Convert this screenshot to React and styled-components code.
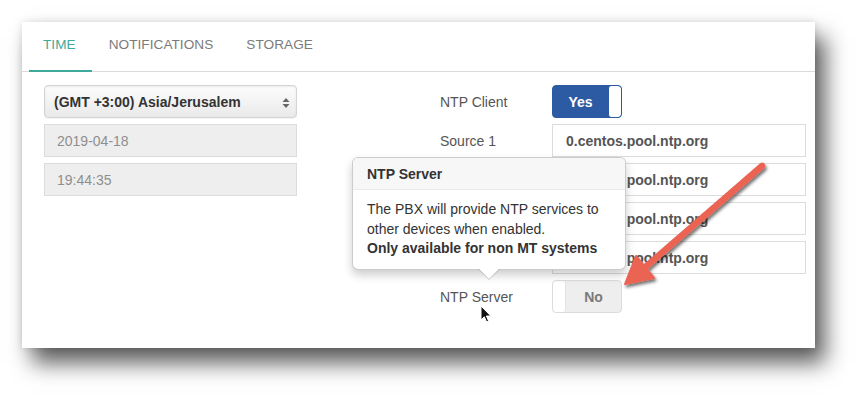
import React from "react";
import styled, { createGlobalStyle } from "styled-components";

const Global = createGlobalStyle`
  html, body { margin: 0; padding: 0; background: #fff; }
  body { font-family: "Liberation Sans", Arial, Helvetica, sans-serif; }
  * { box-sizing: border-box; }
`;

const Stage = styled.div`
  position: relative;
  width: 861px;
  height: 394px;
  padding: 22px 0 0 22px;
  overflow: hidden;
`;

const Panel = styled.div`
  position: relative;
  width: 793px;
  height: 326px;
  background: #fff;
  box-shadow: 10px 15px 21px rgba(0, 0, 0, 0.64), 0 0 8px rgba(0, 0, 0, 0.12);
`;

const TabBar = styled.div`
  display: flex;
  height: 50px;
  padding-left: 7px;
  border-bottom: 1px solid #dcdcdc;
`;

const Tab = styled.div`
  display: flex;
  align-items: center;
  padding: 0 16px 4px ${(p) => (p.$active ? "14px" : "17px")};
  margin-bottom: -1px;
  font-size: 13.6px;
  letter-spacing: 0.05px;
  color: ${(p) => (p.$active ? "#3fa99c" : "#7b7b7b")};
  border-bottom: 2px solid ${(p) => (p.$active ? "#3fa99c" : "transparent")};
`;

const Body = styled.div`
  display: flex;
  justify-content: space-between;
  padding: 13px 9px 0 22px;
`;

const LeftCol = styled.div`
  display: flex;
  flex-direction: column;
  gap: 6px;
  width: 253px;
`;

const Select = styled.div`
  position: relative;
  height: 33px;
  display: flex;
  align-items: center;
  padding: 0 9px;
  border: 1px solid #d4d4d4;
  border-radius: 4px;
  background: linear-gradient(#fdfdfd, #e9e9e9);
  box-shadow: inset 0 1px 2px rgba(0, 0, 0, 0.08), 0 1px 1px rgba(0, 0, 0, 0.05);
  font-size: 14px;
  font-weight: bold;
  color: #333;
`;

const Caret = styled.svg`
  position: absolute;
  right: 6px;
  top: 11px;
`;

const ReadOnly = styled.div`
  height: 33px;
  display: flex;
  align-items: center;
  padding: 0 12px;
  background: #eeeeee;
  border: 1px solid #dcdcdc;
  font-size: 14px;
  color: #8e8e8e;
`;

const Form = styled.div`
  display: grid;
  grid-template-columns: 112px 254px;
  grid-auto-rows: 33px;
  row-gap: 6px;
`;

const Label = styled.div`
  display: flex;
  align-items: center;
  font-size: 14px;
  color: #555;
`;

const Input = styled.div`
  display: flex;
  align-items: center;
  padding: 0 13px;
  border: 1px solid #dcdcdc;
  background: #fff;
  font-size: 14px;
  font-weight: bold;
  color: #555;
`;

const Toggle = styled.div`
  width: 70px;
  height: 33px;
  display: flex;
  flex-direction: ${(p) => (p.$on ? "row" : "row-reverse")};
  border-radius: 4px;
  overflow: hidden;
  border: 1px solid ${(p) => (p.$on ? "#2b5aa2" : "#dcdcdc")};
  background: ${(p) => (p.$on ? "#2c5ba3" : "#eeeeee")};
`;

const ToggleText = styled.div`
  flex: 1;
  display: flex;
  align-items: center;
  justify-content: center;
  font-size: 14px;
  font-weight: bold;
  color: ${(p) => (p.$on ? "#fff" : "#7a7a7a")};
`;

const Knob = styled.div`
  width: 13px;
  background: #fff;
  border-radius: 3px;
  border-left: ${(p) => (p.$on ? "1px solid #2b5aa2" : "0")};
  border-right: ${(p) => (p.$on ? "0" : "1px solid #e2e2e2")};
`;

const Popover = styled.div`
  position: absolute;
  left: 330px;
  top: 135px;
  width: 274px;
  background: #fff;
  border: 1px solid rgba(0, 0, 0, 0.2);
  border-radius: 6px;
  box-shadow: 0 5px 10px rgba(0, 0, 0, 0.2);
  font-size: 14px;
  color: #333;
  z-index: 3;

  &::before,
  &::after {
    content: "";
    position: absolute;
    left: 50%;
    width: 0;
    height: 0;
    border-style: solid;
    border-color: transparent;
  }
  &::before {
    bottom: -11px;
    margin-left: -11px;
    border-width: 11px 11px 0;
    border-top-color: rgba(0, 0, 0, 0.2);
  }
  &::after {
    bottom: -10px;
    margin-left: -10px;
    border-width: 10px 10px 0;
    border-top-color: #fff;
  }
`;

const PopTitle = styled.div`
  height: 32px;
  display: flex;
  align-items: center;
  padding: 0 14px;
  background: #f7f7f7;
  border-bottom: 1px solid #ebebeb;
  border-radius: 5px 5px 0 0;
  font-weight: bold;
`;

const PopContent = styled.div`
  padding: 10px 14px 10px;
  line-height: 19.5px;
`;

const Overlay = styled.svg`
  position: absolute;
  left: 0;
  top: 0;
  pointer-events: none;
  z-index: 5;
`;

export default function App() {
  return (
    <>
      <Global />
      <Stage>
        <Panel>
          <TabBar>
            <Tab $active>TIME</Tab>
            <Tab>NOTIFICATIONS</Tab>
            <Tab>STORAGE</Tab>
          </TabBar>
          <Body>
            <LeftCol>
              <Select>
                (GMT +3:00) Asia/Jerusalem
                <Caret width="8" height="12" viewBox="0 0 8 12">
                  <path d="M4 1 L7.5 5 L0.5 5 Z" fill="#666" />
                  <path d="M4 11 L7.5 7 L0.5 7 Z" fill="#666" />
                </Caret>
              </Select>
              <ReadOnly>2019-04-18</ReadOnly>
              <ReadOnly>19:44:35</ReadOnly>
            </LeftCol>
            <Form>
              <Label>NTP Client</Label>
              <Toggle $on>
                <ToggleText $on>Yes</ToggleText>
                <Knob $on />
              </Toggle>
              <Label>Source 1</Label>
              <Input>0.centos.pool.ntp.org</Input>
              <Label>Source 2</Label>
              <Input>1.centos.pool.ntp.org</Input>
              <Label>Source 3</Label>
              <Input>2.centos.pool.ntp.org</Input>
              <Label>Source 4</Label>
              <Input>3.centos.pool.ntp.org</Input>
              <Label>NTP Server</Label>
              <Toggle>
                <ToggleText>No</ToggleText>
                <Knob />
              </Toggle>
            </Form>
          </Body>
          <Popover>
            <PopTitle>NTP Server</PopTitle>
            <PopContent>
              The PBX will provide NTP services to
              <br />
              other devices when enabled.
              <br />
              <b>Only available for non MT systems</b>
            </PopContent>
          </Popover>
        </Panel>
        <Overlay width="861" height="394" viewBox="0 0 861 394">
          <defs>
            <filter id="sh" x="-20%" y="-20%" width="140%" height="140%">
              <feDropShadow dx="1.5" dy="2.5" stdDeviation="1.6" floodColor="#000" floodOpacity="0.55" />
            </filter>
          </defs>
          <g filter="url(#sh)">
            <line x1="762" y1="166" x2="642" y2="270" stroke="#ea6352" strokeWidth="6.5" strokeLinecap="round" />
            <path d="M625 284 L636 256 L654 278 Z" fill="#ea6352" stroke="#ea6352" strokeWidth="2" strokeLinejoin="round" />
          </g>
          <g transform="translate(481 306)">
            <path
              d="M0 0 L0 14 L3.3 10.8 L5.6 16 L7.6 15.1 L5.4 10 L9.8 10 Z"
              fill="#111"
              stroke="#fff"
              strokeWidth="1"
              strokeLinejoin="round"
            />
          </g>
        </Overlay>
      </Stage>
    </>
  );
}
